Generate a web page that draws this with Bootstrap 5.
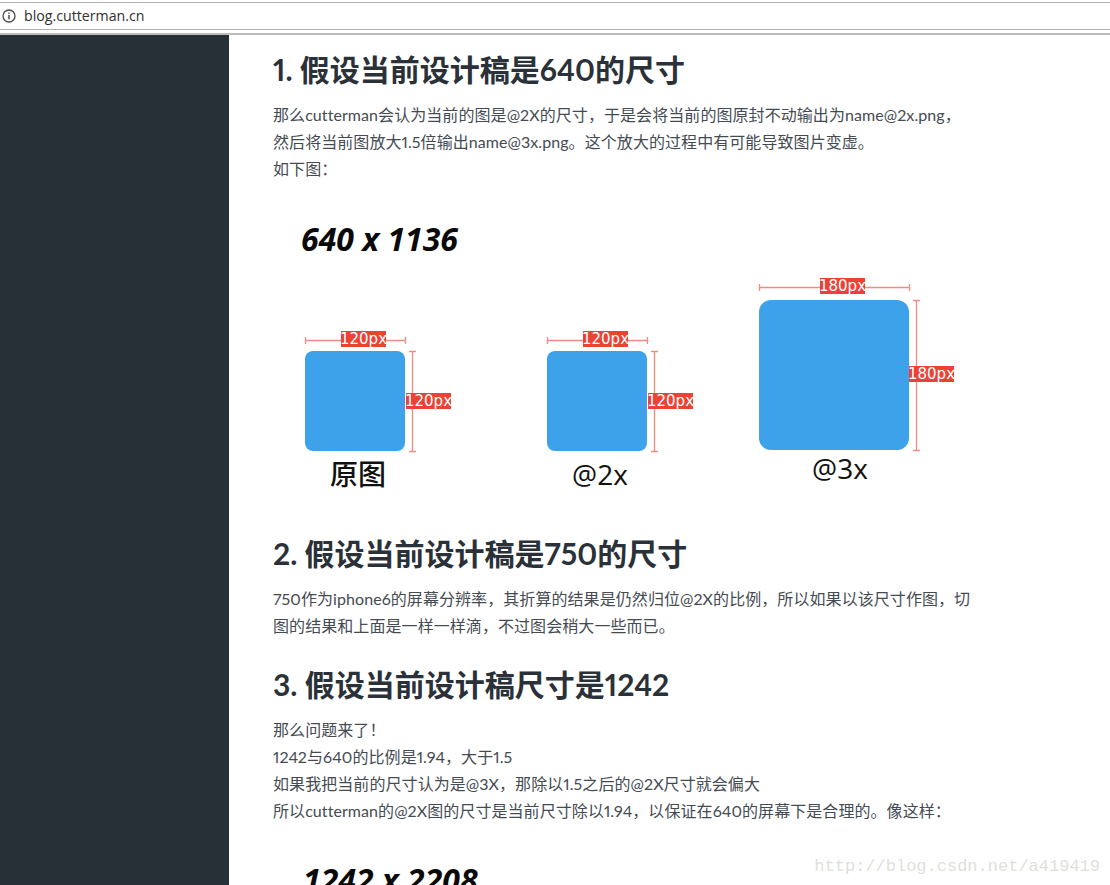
<!DOCTYPE html>
<html lang="zh-CN">
<head>
    <meta charset="UTF-8">
    <title>blog.cutterman.cn</title>
    <link href="https://cdn.jsdelivr.net/npm/bootstrap@5.3.0/dist/css/bootstrap.min.css" rel="stylesheet">
    <style>
        html, body { height: 100%; overflow: hidden; }
        body {
            font-family: "Lato", "Noto Sans CJK SC", sans-serif;
            font-variant-numeric: proportional-nums;
            text-spacing-trim: space-all;
            color: #444b52;
        }
        .addr-bar {
            height: 35px;
            padding-top: 2px;
            background: #fff;
            border-bottom: 2px solid #bcbcbc;
            flex: none;
        }
        .addr-row {
            height: 28px;
            padding-left: 2px;
            border-top: 1px solid #b0b0b0;
            border-bottom: 1px solid #b0b0b0;
            font-family: "Open Sans", sans-serif;
            font-size: 14.2px;
            color: #2f2f2f;
        }
        .side-panel { width: 229px; background: #272f37; flex: none; }
        .post-body { padding: 14px 0 0 44px; width: 760px; }
        .post-body h2 {
            font-size: 30px;
            font-weight: 700;
            line-height: 40px;
            color: #2a3138;
            margin: 0 0 12px;
        }
        .post-body p {
            font-size: 16px;
            line-height: 27px;
            letter-spacing: .07px;
            margin: 0 0 25px;
        }
        .fig-one { display: block; width: 700px; height: 314px; margin-top: 23px; margin-bottom: 14px; }
        .fig-two { display: block; width: 700px; height: 60px; margin-top: 22px; }
        .fig-title { font: italic 700 32px "Open Sans", sans-serif; fill: #0a0a0a; }
        .fig-size { font: 15px "DejaVu Sans", sans-serif; fill: #fff; }
        .fig-name { font: 500 28px "Open Sans", "Noto Sans CJK SC", sans-serif; fill: #111; }
        .water-mark {
            position: absolute;
            right: 10px;
            bottom: 9px;
            font: 17px "Liberation Mono", monospace;
            color: #dfdfdb;
        }
    </style>
</head>
<body class="d-flex flex-column position-relative">
    <div class="addr-bar">
        <div class="addr-row d-flex align-items-center gap-2">
            <svg width="14" height="14" viewBox="0 0 14 14" fill="none" stroke="#4a4a4a">
                <circle cx="7" cy="7" r="6" stroke-width="1.3"/>
                <path d="M7 6v4.2M7 3.4v1.4" stroke-width="1.5"/>
            </svg>
            <span>blog.cutterman.cn</span>
        </div>
    </div>

    <div class="d-flex flex-grow-1">
        <div class="side-panel"></div>
        <div class="post-body">
            <h2>1. 假设当前设计稿是640的尺寸</h2>
            <p class="mb-0">那么cutterman会认为当前的图是@2X的尺寸，于是会将当前的图原封不动输出为name@2x.png，<br>
            然后将当前图放大1.5倍输出name@3x.png。这个放大的过程中有可能导致图片变虚。<br>
            如下图：</p>

            <svg class="fig-one" viewBox="0 0 700 314">
                <text class="fig-title" x="28" y="46">640 x 1136</text>

                <g stroke="#f28b82" stroke-width="1.3" fill="none">
                    <path d="M32.500 135.500h100M32.500 132v7M132.500 132v7"/>
                    <path d="M139.500 146.500v100M136 146.500h7M136 246.500h7"/>
                    <path d="M274.500 135.500h100M274.500 132v7M374.500 132v7"/>
                    <path d="M381.500 146.500v100M378 146.500h7M378 246.500h7"/>
                    <path d="M486.500 82.500h150M486.500 79v7M636.500 79v7"/>
                    <path d="M643.500 95.500v150M640 95.500h7M640 245.500h7"/>
                </g>

                <rect x="32" y="146" width="100" height="100" rx="8" fill="#3ea2eb"/>
                <rect x="274" y="146" width="100" height="100" rx="8" fill="#3ea2eb"/>
                <rect x="486" y="95" width="150" height="150" rx="12" fill="#3ea2eb"/>

                <g fill="#ea4335">
                    <rect x="68" y="126" width="45" height="16"/>
                    <rect x="133" y="188" width="45" height="16"/>
                    <rect x="310" y="126" width="45" height="16"/>
                    <rect x="375" y="188" width="45" height="16"/>
                    <rect x="547" y="73" width="45" height="16"/>
                    <rect x="636" y="161" width="45" height="16"/>
                </g>
                <g class="fig-size" text-anchor="middle">
                    <text x="90.500" y="139">120px</text>
                    <text x="155.500" y="201">120px</text>
                    <text x="332.500" y="139">120px</text>
                    <text x="397.500" y="201">120px</text>
                    <text x="569.500" y="86">180px</text>
                    <text x="658.500" y="174">180px</text>
                </g>

                <g class="fig-name" text-anchor="middle">
                    <text x="85" y="280">原图</text>
                    <text x="327" y="280">@2x</text>
                    <text x="567" y="274">@3x</text>
                </g>
            </svg>

            <h2>2. 假设当前设计稿是750的尺寸</h2>
            <p>750作为iphone6的屏幕分辨率，其折算的结果是仍然归位@2X的比例，所以如果以该尺寸作图，切<br>
            图的结果和上面是一样一样滴，不过图会稍大一些而已。</p>

            <h2>3. 假设当前设计稿尺寸是1242</h2>
            <p class="mb-0">那么问题来了！<br>
            1242与640的比例是1.94，大于1.5<br>
            如果我把当前的尺寸认为是@3X，那除以1.5之后的@2X尺寸就会偏大<br>
            所以cutterman的@2X图的尺寸是当前尺寸除以1.94，以保证在640的屏幕下是合理的。像这样：</p>

            <svg class="fig-two" viewBox="0 0 700 60">
                <text class="fig-title" x="30" y="46">1242 x 2208</text>
            </svg>
        </div>
    </div>

    <div class="water-mark">http://blog.csdn.net/a419419</div>

    <script src="https://cdn.jsdelivr.net/npm/bootstrap@5.3.0/dist/js/bootstrap.bundle.min.js"></script>
</body>
</html>
